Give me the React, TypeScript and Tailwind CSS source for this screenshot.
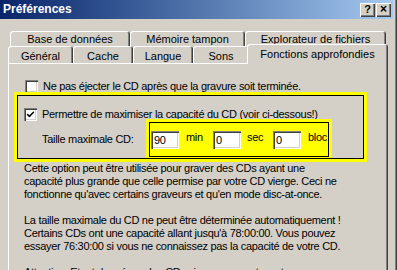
import { Check } from 'lucide-react'

const raised = 'shadow-[inset_1px_1px_#ffffff,inset_-1px_-1px_#404040,inset_-2px_-2px_#808080]'
const sunken = 'shadow-[inset_1px_1px_#808080,inset_2px_2px_#404040,inset_-1px_-1px_#ffffff,inset_-2px_-2px_#d4d0c8]'
const tabEdge = 'rounded-t-[3px] shadow-[inset_1px_1px_#ffffff,inset_-1px_0_#404040,inset_-2px_0_#808080]'

const Tab = ({ label, w, className = '' }: { label: string; w: string; className?: string }) => (
  <div className={`flex h-full shrink-0 items-center justify-center bg-[#d4d0c8] ${tabEdge} ${w} ${className}`}>
    {label}
  </div>
)

const CheckBox = ({ checked }: { checked?: boolean }) => (
  <span className={`flex size-[13px] shrink-0 items-center justify-center bg-white ${sunken}`}>
    {checked && <Check className="size-[9px] text-black" strokeWidth={4} />}
  </span>
)

const Field = ({ value }: { value: string }) => (
  <span className={`flex h-[18px] w-[28px] shrink-0 items-center bg-white pl-[3px] ${sunken}`}>{value}</span>
)

const lines1 = [
  'Cette option peut être utilisée pour graver des CDs ayant une',
  'capacité plus grande que celle permise par votre CD vierge. Ceci ne',
  "fonctionne qu'avec certains graveurs et qu'en mode disc-at-once.",
]

const lines2 = [
  'La taille maximale du CD ne peut être déterminée automatiquement !',
  "Certains CDs ont une capacité allant jusqu'à 78:00:00. Vous pouvez",
  'essayer 76:30:00 si vous ne connaissez pas la capacité de votre CD.',
]

export default function App() {
  return (
    <div className="relative h-[270px] w-[397px] overflow-hidden bg-[#d4d0c8] font-['Liberation_Sans',Arial,sans-serif] text-[11px] leading-[13px] text-black">
      <div className="flex h-full flex-col pr-[4px] shadow-[inset_-1px_0_#404040,inset_-2px_0_#808080]">
        {/* Title bar */}
        <div className="flex h-[19px] shrink-0 items-center justify-between bg-gradient-to-r from-[#0a246a] to-[#a6caf0] pl-[3px] pr-[2px]">
          <span className="text-[12px] font-bold text-white">Préférences</span>
          <div className="flex gap-[1px]">
            <span className={`flex h-[14px] w-[15px] items-center justify-center bg-[#d4d0c8] text-[11px] font-bold ${raised}`}>?</span>
            <span className={`flex h-[14px] w-[15px] items-center justify-center bg-[#d4d0c8] text-[12px] font-bold ${raised}`}>×</span>
          </div>
        </div>

        {/* Tabs */}
        <div className="mt-[12px] flex h-[17px] pl-[10px]">
          <Tab label="Base de données" w="w-[120px] pt-[2px]" />
          <Tab label="Mémoire tampon" w="w-[115px] pt-[2px]" />
          <Tab label="Explorateur de fichiers" w="w-[141px] pt-[2px]" />
        </div>
        <div className="flex h-[17px] items-start pl-[8px]">
          <Tab label="Général" w="w-[65px] pt-[3px]" />
          <Tab label="Cache" w="w-[60px] pt-[3px]" />
          <Tab label="Langue" w="w-[60px] pt-[3px]" />
          <Tab label="Sons" w="w-[56px] pt-[3px]" />
          <Tab label="Fonctions approfondies" w="w-[141px]" className="relative z-10 -mt-[2px] -ml-[2px] !h-[20px] !items-start pt-[4px]" />
        </div>

        {/* Panel */}
        <div className={`ml-[8px] w-[380px] flex-1 pl-[16px] pt-[17px] tracking-[-0.3px] ${raised}`}>
          <div className="flex items-center gap-[5px] pl-[1px]">
            <CheckBox />
            <span>Ne pas éjecter le CD après que la gravure soit terminée.</span>
          </div>
          <div className="mt-[15px] flex items-center gap-[5px]">
            <CheckBox checked />
            <span>Permettre de maximiser la capacité du CD (voir ci-dessous!)</span>
          </div>
          <div className="-mt-[2px] flex items-start">
            <span className="mt-[14px] w-[122px] pl-[18px]">Taille maximale CD:</span>
            {/* yellow highlight around the size fields */}
            <div className="flex h-[41px] w-[186px] items-start border-[3px] border-[#ffff00] bg-[#ffff00] pl-[2px] pt-[9px] shadow-[inset_0_0_0_1px_#000]">
              <Field value="90" />
              <span className="ml-[7px] w-[27px]">min</span>
              <Field value="0" />
              <span className="ml-[6px] w-[26px]">sec</span>
              <Field value="0" />
              <span className="ml-[7px]">bloc</span>
            </div>
          </div>
          <div className="mt-[2px]">
            {lines1.map((l) => (
              <div key={l}>{l}</div>
            ))}
            <div className="h-[13px]" />
            {lines2.map((l) => (
              <div key={l}>{l}</div>
            ))}
            <div className="h-[13px]" />
            <div>Attention: Etant donné que les CDs vierges ne sont pas tous</div>
          </div>
        </div>
      </div>

      {/* Yellow annotation frame over the CD size options */}
      <div className="pointer-events-none absolute left-[14px] top-[92px] h-[70px] w-[353px] border-[3px] border-[#ffff00] shadow-[inset_0_0_0_1px_#000]" />
    </div>
  )
}
